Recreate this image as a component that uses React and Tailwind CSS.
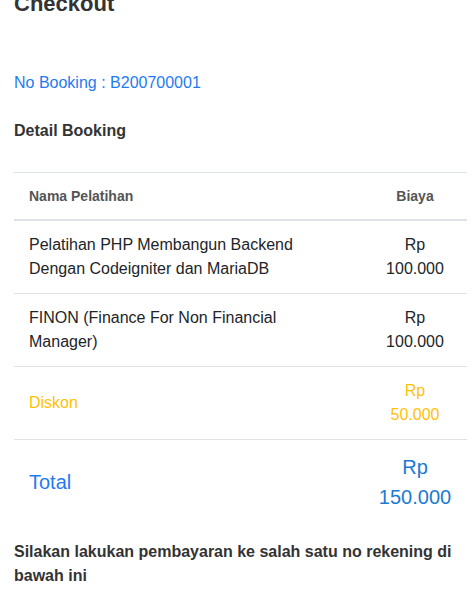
import React from 'react'

const items = [
  { nama: 'Pelatihan PHP Membangun Backend Dengan Codeigniter dan MariaDB', biaya: '100.000' },
  { nama: 'FINON (Finance For Non Financial Manager)', biaya: '100.000' },
]

export default function App() {
  return (
    <div className="bg-white px-[14px] text-[16px] leading-[24px] text-[#212529] overflow-hidden" style={{ fontFamily: '"Liberation Sans", Arial, sans-serif' }}>
      <h1 className="-mt-[9px] text-[22px] leading-[26px] font-bold text-[#333]">Checkout</h1>

      <p className="mt-[54px] text-[#1f7bf2]">No Booking : B200700001</p>

      <h3 className="mt-[24px] font-bold text-[#333]">Detail Booking</h3>

      <table className="mt-[29px] w-[453px] border-collapse">
        <thead>
          <tr className="border-t border-b-2 border-[#dee2e6]">
            <th className="px-[15px] py-[14px] text-left text-[14px] leading-[18px] font-bold text-[#555]">Nama Pelatihan</th>
            <th className="w-[104px] px-[18px] py-[14px] text-center text-[14px] leading-[18px] font-bold text-[#555]">Biaya</th>
          </tr>
        </thead>
        <tbody>
          {items.map((it, i) => (
            <tr key={i} className="border-b border-[#dee2e6]">
              <td className="px-[15px] py-[12px] align-middle">{it.nama}</td>
              <td className="px-[18px] py-[12px] text-center align-middle">Rp {it.biaya}</td>
            </tr>
          ))}
          <tr className="border-b border-[#dee2e6] text-[#ffc107]">
            <td className="px-[15px] py-[12px] align-middle">Diskon</td>
            <td className="px-[18px] py-[12px] text-center align-middle">Rp 50.000</td>
          </tr>
          <tr className="text-[20px] leading-[30px]">
            <td className="px-[15px] py-[12px] align-middle text-[#1f7bf2]">Total</td>
            <td className="px-[6px] py-[12px] text-center align-middle text-[#1b7ad1]">Rp 150.000</td>
          </tr>
        </tbody>
      </table>

      <p className="mt-[16px] pb-[20px] font-bold text-[#333]">Silakan lakukan pembayaran ke salah satu no rekening di bawah ini</p>
    </div>
  )
}
